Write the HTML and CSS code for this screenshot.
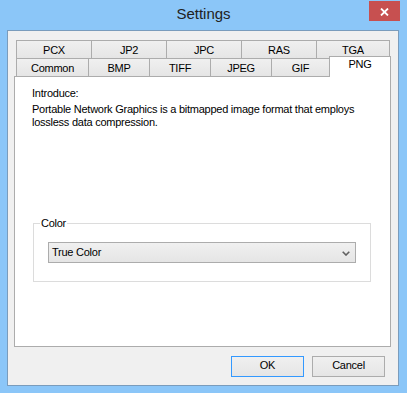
FILE: index.html
```html
<!DOCTYPE html>
<html>
<head>
<meta charset="utf-8">
<link rel="stylesheet" href="styles.css">
</head>
<body>
<div class="window">
  <div class="titlebar">
    <span class="title">Settings</span>
    <button class="close" aria-label="Close">
      <svg width="9" height="8" viewBox="0 0 9 8"><path d="M1 0.5 L8 7.5 M8 0.5 L1 7.5" stroke="#fff" stroke-width="1.8" fill="none"/></svg>
    </button>
  </div>
  <div class="client">
    <div class="tabctl">
      <div class="tabrow">
        <div class="tab w76">PCX</div>
        <div class="tab w76">JP2</div>
        <div class="tab w76">JPC</div>
        <div class="tab w76">RAS</div>
        <div class="tab w74">TGA</div>
      </div>
      <div class="tabrow front">
        <div class="tab w73">Common</div>
        <div class="tab w62">BMP</div>
        <div class="tab w62">TIFF</div>
        <div class="tab w62">JPEG</div>
        <div class="tab w59">GIF</div>
        <div class="tab w62 active">PNG</div>
      </div>
      <div class="panel">
        <p class="intro-label">Introduce:</p>
        <p class="intro">Portable Network Graphics is a bitmapped image format that employs<br>lossless data compression.</p>
        <fieldset class="group">
          <legend>Color</legend>
          <div class="combo">
            <span>True Color</span>
            <svg width="8" height="5" viewBox="0 0 8 5"><path d="M0.7 0.7 L4 4 L7.3 0.7" stroke="#606060" stroke-width="1.6" fill="none"/></svg>
          </div>
        </fieldset>
      </div>
    </div>
    <div class="footer">
      <button class="btn focused">OK</button>
      <button class="btn">Cancel</button>
    </div>
  </div>
</div>
</body>
</html>
```
FILE: styles.css
```css
* { box-sizing: border-box; }
html, body { margin: 0; padding: 0; }
body {
  width: 407px;
  height: 393px;
  overflow: hidden;
  font-family: "Liberation Sans", Arial, sans-serif;
  font-size: 11px;
  letter-spacing: -0.25px;
  color: #000;
}
.window {
  width: 407px;
  height: 393px;
  background: #8bc6f8;
  display: flex;
  flex-direction: column;
}
.titlebar {
  height: 30px;
  display: grid;
  grid-template-columns: 1fr auto 1fr;
}
.title {
  grid-column: 2;
  font-size: 15px;
  letter-spacing: 0;
  line-height: 28px;
  color: #222;
}
.close {
  grid-column: 3;
  justify-self: end;
  align-self: start;
  margin: 1px 7px 0 0;
  width: 31px;
  height: 20px;
  border: none;
  padding: 0;
  background: #c75050;
  display: flex;
  align-items: center;
  justify-content: center;
}
.close svg { display: block; margin-top: 1px; }
.client {
  margin: 0 8px 7px 7px;
  height: 356px;
  border: 1px solid #7a9cbc;
  background: #f0f0f0;
  padding: 9px 7px 0 6px;
  display: flex;
  flex-direction: column;
}
.tabctl { width: 377px; }
.tabrow {
  display: flex;
  margin-left: 2px;
  height: 18px;
}
.tab {
  height: 18px;
  border: 1px solid #acacac;
  border-bottom: none;
  background: linear-gradient(#f0f0f0, #e5e5e5);
  text-align: center;
  line-height: 13px;
  padding-top: 3px;
  margin-left: -1px;
}
.tab:first-child { margin-left: 0; }
.w76 { width: 76px; }
.w74 { width: 74px; }
.w73 { width: 73px; }
.w62 { width: 62px; }
.w59 { width: 59px; }
.tab.active {
  position: relative;
  z-index: 1;
  height: 21px;
  margin-top: -2px;
  background: #fff;
  padding-top: 1px;
}
.panel {
  height: 271px;
  border: 1px solid #acacac;
  background: #fff;
  padding: 10px 0 0 17px;
}
.panel p { margin: 0; line-height: 13px; white-space: nowrap; }
.panel p.intro { margin-top: 3px; }
.group {
  margin: 87px 0 0 1px;
  width: 338px;
  padding: 0 0 18px 14px;
  border: 1px solid #dcdcdc;
  min-width: 0;
}
.group legend {
  margin-left: -8px;
  padding: 0 1px;
  line-height: 14px;
}
.combo {
  margin-top: 12px;
  width: 308px;
  height: 21px;
  border: 1px solid #acacac;
  background: linear-gradient(#f0f0f0, #e5e5e5);
  display: flex;
  align-items: center;
  justify-content: space-between;
  padding: 0 5px 0 3px;
  line-height: 19px;
}
.combo svg { display: block; margin-top: 1px; }
.footer {
  margin-top: 9px;
  display: flex;
  justify-content: flex-end;
  gap: 8px;
  padding-right: 6px;
}
.btn {
  width: 73px;
  height: 21px;
  border: 1px solid #acacac;
  background: linear-gradient(#f0f0f0, #e5e5e5);
  font-family: "Liberation Sans", Arial, sans-serif;
  font-size: 11px;
  letter-spacing: -0.25px;
  color: #000;
  padding: 0 0 2px 0;
  line-height: 17px;
}
.btn.focused { border-color: #3399ff; }
```
